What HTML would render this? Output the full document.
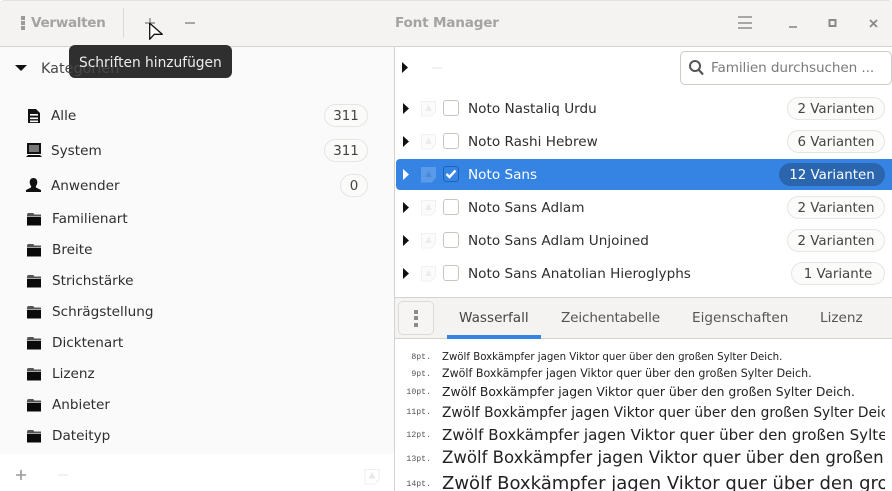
<!DOCTYPE html>
<html><head><meta charset="utf-8"><style>
html,body{margin:0;padding:0;width:892px;height:491px;overflow:hidden;background:#fff}
body{position:relative;font-family:"DejaVu Sans","Liberation Sans",sans-serif;color:#2e2e2e}
.t{position:absolute;white-space:nowrap;line-height:20px;height:20px}
.b{position:absolute}
svg{position:absolute;overflow:visible}
.pill{position:absolute;box-sizing:border-box;height:23px;border:1px solid #e6e5e3;border-radius:12px;font-size:13.4px;line-height:23px;text-align:center;color:#444;background:#fbfbfa;white-space:nowrap}
.cb{position:absolute;left:443px;width:16px;height:16px;box-sizing:border-box;border:1px solid #c9c4bd;border-radius:3px;background:#fff}
.w{position:absolute;left:442px;width:443px;overflow:hidden;white-space:nowrap;color:#222}
.p{position:absolute;right:461px;font-family:"Liberation Mono",monospace;font-size:8.2px;color:#555;white-space:nowrap}
</style></head><body>
<div class="b" style="left:0;top:0;width:892px;height:46px;background:#f4f3f1;border-top:1px solid #e4e2df;box-sizing:border-box;border-radius:4px 4px 0 0"></div>
<div class="b" style="left:0;top:46px;width:892px;height:1px;background:#d6d3cf"></div>
<div class="b" style="left:0;top:47px;width:394px;height:407px;background:#fafafa"></div>
<div class="b" style="left:394px;top:47px;width:1px;height:444px;background:#d6d3cf"></div>

<div class="b" style="left:21px;top:16px;width:4px;height:4px;background:#9a9a98"></div>
<div class="b" style="left:21px;top:21px;width:4px;height:4px;background:#9a9a98"></div>
<div class="b" style="left:21px;top:26px;width:4px;height:4px;background:#9a9a98"></div>
<div class="t" style="left:31px;top:13px;font-size:13.6px;font-weight:bold;color:#a3a3a1;letter-spacing:-.33px">Verwalten</div>
<div class="b" style="left:123px;top:8px;width:1px;height:30px;background:#dbd9d5"></div>
<svg style="left:0;top:0" width="892" height="46">
<path d="M145 23h10M150 18v10M185 23h10" stroke="#8e8e8c" stroke-width="1.5" fill="none"/>
<path d="M738 17h14M738 23h14M738 28h14" stroke="#8e8e8c" stroke-width="1.6" fill="none"/>
<path d="M789 27h8" stroke="#8a8a88" stroke-width="1.6"/>
<rect x="829.500" y="20" width="6" height="6" fill="none" stroke="#8a8a88" stroke-width="2"/>
<path d="M870 20l7 7M877 20l-7 7" stroke="#8a8a88" stroke-width="1.8"/>
</svg>
<div class="t" style="left:395px;top:13px;font-size:13.6px;font-weight:bold;color:#a3a3a1;letter-spacing:-.2px">Font Manager</div>
<svg style="left:0;top:0;z-index:7" width="200" height="50"><path d="M149.700 23.300V39.300L154.200 34.300H162.300Z" fill="#fff" stroke="#111" stroke-width="1.300" stroke-linejoin="round"/></svg>

<svg style="left:0;top:0" width="394" height="491"><path d="M15 65h12l-6 6z" fill="#111"/></svg>
<div class="b" style="left:69px;top:45px;width:163px;height:33px;border-radius:6px;background:#2f2f2f;z-index:5"></div>
<div class="t" style="left:41px;top:59px;font-size:14.4px;color:#484848;z-index:5">Kategorien</div>
<div class="t" style="left:79px;top:53px;font-size:13.8px;color:#ececec;z-index:6;letter-spacing:-.02px">Schriften hinzufügen</div>

<svg style="left:0;top:0" width="394" height="491" fill="#111">
<path fill-rule="evenodd" d="M28 109h8l4 4v10h-12zM30 114v1.600h8V114zM30 117.500v1.600h8v-1.600zM30 120.500v1.600h8v-1.600z"/>
<path fill-rule="evenodd" d="M27 143h14v11H27zM29 145v7h10v-7z"/><rect x="29" y="145" width="10" height="7" fill="#777"/>
<path d="M26 157l2-2h12l2 2z"/>
<path d="M33.500 178c2.600 0 3.800 2 3.800 4.200 0 1.800-.8 3-1.500 4l.2 1.300 5 2.500V192H26v-2l5-2.500.2-1.300c-.7-1-1.500-2.200-1.500-4 0-2.200 1.200-4.200 3.800-4.200z"/>
</svg>
<svg width="0" height="0"><defs><g id="f"><path d="M0 2.500 .8 1h5.500l1 1.500H14v2H0z" fill="#555"/><path d="M0 5h14v8.500H0z" fill="#0a0a0a"/></g></defs></svg>
<svg style="left:27px;top:212px" width="14" height="14"><use href="#f"/></svg>
<svg style="left:27px;top:243px" width="14" height="14"><use href="#f"/></svg>
<svg style="left:27px;top:274px" width="14" height="14"><use href="#f"/></svg>
<svg style="left:27px;top:305px" width="14" height="14"><use href="#f"/></svg>
<svg style="left:27px;top:336px" width="14" height="14"><use href="#f"/></svg>
<svg style="left:27px;top:367px" width="14" height="14"><use href="#f"/></svg>
<svg style="left:27px;top:398px" width="14" height="14"><use href="#f"/></svg>
<svg style="left:27px;top:429px" width="14" height="14"><use href="#f"/></svg>

<div class="t" style="left:51px;top:106px;font-size:13.6px">Alle</div>
<div class="t" style="left:51px;top:141px;font-size:13.6px">System</div>
<div class="t" style="left:51px;top:176px;font-size:13.6px">Anwender</div>
<div class="t" style="left:52px;top:209px;font-size:13.6px">Familienart</div>
<div class="t" style="left:52px;top:240px;font-size:13.6px">Breite</div>
<div class="t" style="left:52px;top:271px;font-size:13.6px">Strichstärke</div>
<div class="t" style="left:52px;top:302px;font-size:13.6px">Schrägstellung</div>
<div class="t" style="left:52px;top:333px;font-size:13.6px">Dicktenart</div>
<div class="t" style="left:52px;top:364px;font-size:13.6px">Lizenz</div>
<div class="t" style="left:52px;top:395px;font-size:13.6px">Anbieter</div>
<div class="t" style="left:52px;top:426px;font-size:13.6px">Dateityp</div>
<div class="pill" style="left:324px;top:104px;width:44px">311</div>
<div class="pill" style="left:324px;top:139px;width:44px">311</div>
<div class="pill" style="left:340px;top:174px;width:28px">0</div>

<svg style="left:0;top:454px" width="394" height="37">
<path d="M16 21h10M21 16v10" stroke="#999" stroke-width="1.600"/>
<path d="M58 21h10" stroke="#eee" stroke-width="1.600"/>
<path d="M365 15.500h14v10l-4 4.500h-10z" fill="#fff" stroke="#eee"/><path d="M372 18l3.500 6.500h-7z" fill="#e8e8e8"/>
</svg>

<svg style="left:395px;top:47px" width="497" height="250">
<path d="M7 15l6 5.500-6 5.500z" fill="#111"/>
<path d="M37 21h10" stroke="#eee" stroke-width="1.600"/>
</svg>
<div class="b" style="left:680px;top:51px;width:212px;height:34px;box-sizing:border-box;border:1px solid #cfcbc5;border-radius:5px;background:#fff"></div>
<svg style="left:688px;top:59px" width="18" height="18"><circle cx="7" cy="7" r="5" fill="none" stroke="#555" stroke-width="2"/><path d="M10.500 10.500l4.500 5" stroke="#555" stroke-width="2.200"/></svg>
<div class="t" style="left:711px;top:58px;font-size:13.6px;color:#7b7b7b;letter-spacing:-.1px">Familien durchsuchen ...</div>

<div class="b" style="left:396px;top:159px;width:496px;height:31px;border-radius:4px 0 0 4px;background:#3584e4"></div>

<svg width="0" height="0"><defs><g id="w"><path d="M.5 .5h14v10l-4 4.500h-10z" fill="#fbfbfb" stroke="#f1f1f1"/><path d="M7.500 3.500l3.200 6.500h-6.400z" fill="#ececec"/></g></defs></svg>
<svg style="left:421px;top:101px" width="16" height="16"><use href="#w"/></svg>
<svg style="left:421px;top:134px" width="16" height="16"><use href="#w"/></svg>
<svg style="left:421px;top:167px" width="16" height="16"><path d="M.5 .5h14v10l-4 4.500h-10z" fill="#5b9ae8" stroke="#5b9ae8"/><path d="M7.500 3.500l3.200 6.500h-6.400z" fill="#4a8ad9"/></svg>
<svg style="left:421px;top:200px" width="16" height="16"><use href="#w"/></svg>
<svg style="left:421px;top:233px" width="16" height="16"><use href="#w"/></svg>
<svg style="left:421px;top:266px" width="16" height="16"><use href="#w"/></svg>

<svg style="left:395px;top:90px" width="20" height="200">
<path d="M8 13l6 5.500-6 5.500zM8 46l6 5.500-6 5.500zM8 112l6 5.500-6 5.500zM8 145l6 5.500-6 5.500zM8 178l6 5.500-6 5.500z" fill="#111"/>
<path d="M8 79l6 5.500-6 5.500z" fill="#fff"/>
</svg>

<div class="cb" style="top:100px"></div>
<div class="cb" style="top:133px"></div>
<div class="cb" style="top:166px;background:#3584e4;border-color:#1f62b8"></div>
<svg style="left:443px;top:166px" width="16" height="16"><path d="M3.500 8l3 3 6-6.500" fill="none" stroke="#fff" stroke-width="2.400"/></svg>
<div class="cb" style="top:199px"></div>
<div class="cb" style="top:232px"></div>
<div class="cb" style="top:265px"></div>

<div class="t" style="left:468px;top:99px;font-size:13.6px">Noto Nastaliq Urdu</div>
<div class="t" style="left:468px;top:132px;font-size:13.6px">Noto Rashi Hebrew</div>
<div class="t" style="left:468px;top:165px;font-size:13.6px;color:#fff">Noto Sans</div>
<div class="t" style="left:468px;top:198px;font-size:13.6px">Noto Sans Adlam</div>
<div class="t" style="left:468px;top:231px;font-size:13.6px">Noto Sans Adlam Unjoined</div>
<div class="t" style="left:468px;top:264px;font-size:13.6px">Noto Sans Anatolian Hieroglyphs</div>

<div class="pill" style="left:787px;top:97px;width:98px">2 Varianten</div>
<div class="pill" style="left:787px;top:130px;width:98px">6 Varianten</div>
<div class="pill" style="left:779px;top:163px;width:106px;background:#2a65ae;border-color:#2a65ae;color:#fff">12 Varianten</div>
<div class="pill" style="left:787px;top:196px;width:98px">2 Varianten</div>
<div class="pill" style="left:787px;top:229px;width:98px">2 Varianten</div>
<div class="pill" style="left:791px;top:262px;width:94px">1 Variante</div>

<div class="b" style="left:395px;top:297px;width:497px;height:42px;background:#f4f3f1;box-sizing:border-box;border-top:1px solid #d6d3cf;border-bottom:1px solid #d6d3cf"></div>
<div class="b" style="left:398px;top:301px;width:36px;height:34px;box-sizing:border-box;border:1px solid #dddbd7;border-radius:5px;background:#f6f5f4"></div>
<div class="b" style="left:414px;top:310px;width:4px;height:4px;background:#8c8c8a"></div>
<div class="b" style="left:414px;top:316px;width:4px;height:4px;background:#8c8c8a"></div>
<div class="b" style="left:414px;top:323px;width:4px;height:4px;background:#8c8c8a"></div>
<div class="b" style="left:447px;top:335px;width:94px;height:4px;background:#3584e4"></div>
<div class="t" style="left:459px;top:308px;font-size:13.6px;color:#444">Wasserfall</div>
<div class="t" style="left:561px;top:308px;font-size:13.6px;color:#555;letter-spacing:-.15px">Zeichentabelle</div>
<div class="t" style="left:692px;top:308px;font-size:13.6px;color:#555">Eigenschaften</div>
<div class="t" style="left:820px;top:308px;font-size:13.6px;color:#555">Lizenz</div>

<div class="p" style="top:353px">8pt.</div>
<div class="p" style="top:370px">9pt.</div>
<div class="p" style="top:388px">10pt.</div>
<div class="p" style="top:408px">11pt.</div>
<div class="p" style="top:431px">12pt.</div>
<div class="p" style="top:455px">13pt.</div>
<div class="p" style="top:480px">14pt.</div>
<div class="w" style="top:350px;font-size:10.2px;line-height:16px">Zwölf Boxkämpfer jagen Viktor quer über den großen Sylter Deich.</div>
<div class="w" style="top:365px;font-size:11.07px;line-height:18px">Zwölf Boxkämpfer jagen Viktor quer über den großen Sylter Deich.</div>
<div class="w" style="top:382px;font-size:12.36px;line-height:20px">Zwölf Boxkämpfer jagen Viktor quer über den großen Sylter Deich.</div>
<div class="w" style="top:402px;font-size:13.75px;line-height:22px">Zwölf Boxkämpfer jagen Viktor quer über den großen Sylter Deich.</div>
<div class="w" style="top:423px;font-size:15.1px;line-height:24px">Zwölf Boxkämpfer jagen Viktor quer über den großen Sylter Deich.</div>
<div class="w" style="top:445px;font-size:16.56px;line-height:26px">Zwölf Boxkämpfer jagen Viktor quer über den großen Sylter Deich.</div>
<div class="w" style="top:470px;font-size:18px;line-height:28px;height:21px">Zwölf Boxkämpfer jagen Viktor quer über den großen Sylter Deich.</div>
</body></html>
